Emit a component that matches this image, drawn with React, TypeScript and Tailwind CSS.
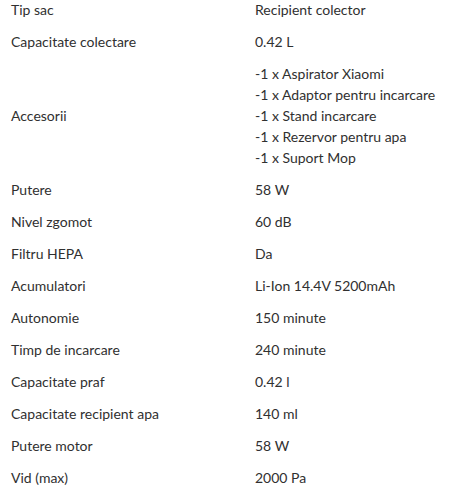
import React from 'react';

const rows: { label: string; value: string[] }[] = [
  { label: 'Tip sac', value: ['Recipient colector'] },
  { label: 'Capacitate colectare', value: ['0.42 L'] },
  {
    label: 'Accesorii',
    value: [
      '-1 x Aspirator Xiaomi',
      '-1 x Adaptor pentru incarcare',
      '-1 x Stand incarcare',
      '-1 x Rezervor pentru apa',
      '-1 x Suport Mop',
    ],
  },
  { label: 'Putere', value: ['58 W'] },
  { label: 'Nivel zgomot', value: ['60 dB'] },
  { label: 'Filtru HEPA', value: ['Da'] },
  { label: 'Acumulatori', value: ['Li-Ion 14.4V 5200mAh'] },
  { label: 'Autonomie', value: ['150 minute'] },
  { label: 'Timp de incarcare', value: ['240 minute'] },
  { label: 'Capacitate praf', value: ['0.42 l'] },
  { label: 'Capacitate recipient apa', value: ['140 ml'] },
  { label: 'Putere motor', value: ['58 W'] },
  { label: 'Vid (max)', value: ['2000 Pa'] },
];

export default function App() {
  return (
    <div className="w-[476px] h-[497px] overflow-hidden bg-white">
      <div
        className="-mt-[7px] text-[14px] leading-[21px] text-[#303030]"
        style={{ fontFamily: 'Lato, "Liberation Sans", sans-serif' }}
      >
        {rows.map((r) => (
          <div key={r.label} className="flex items-center py-[5.5px]">
            <div className="w-[255px] pl-[11px] shrink-0">{r.label}</div>
            <div className="flex flex-col">
              {r.value.map((v) => (
                <span key={v}>{v}</span>
              ))}
            </div>
          </div>
        ))}
      </div>
    </div>
  );
}
